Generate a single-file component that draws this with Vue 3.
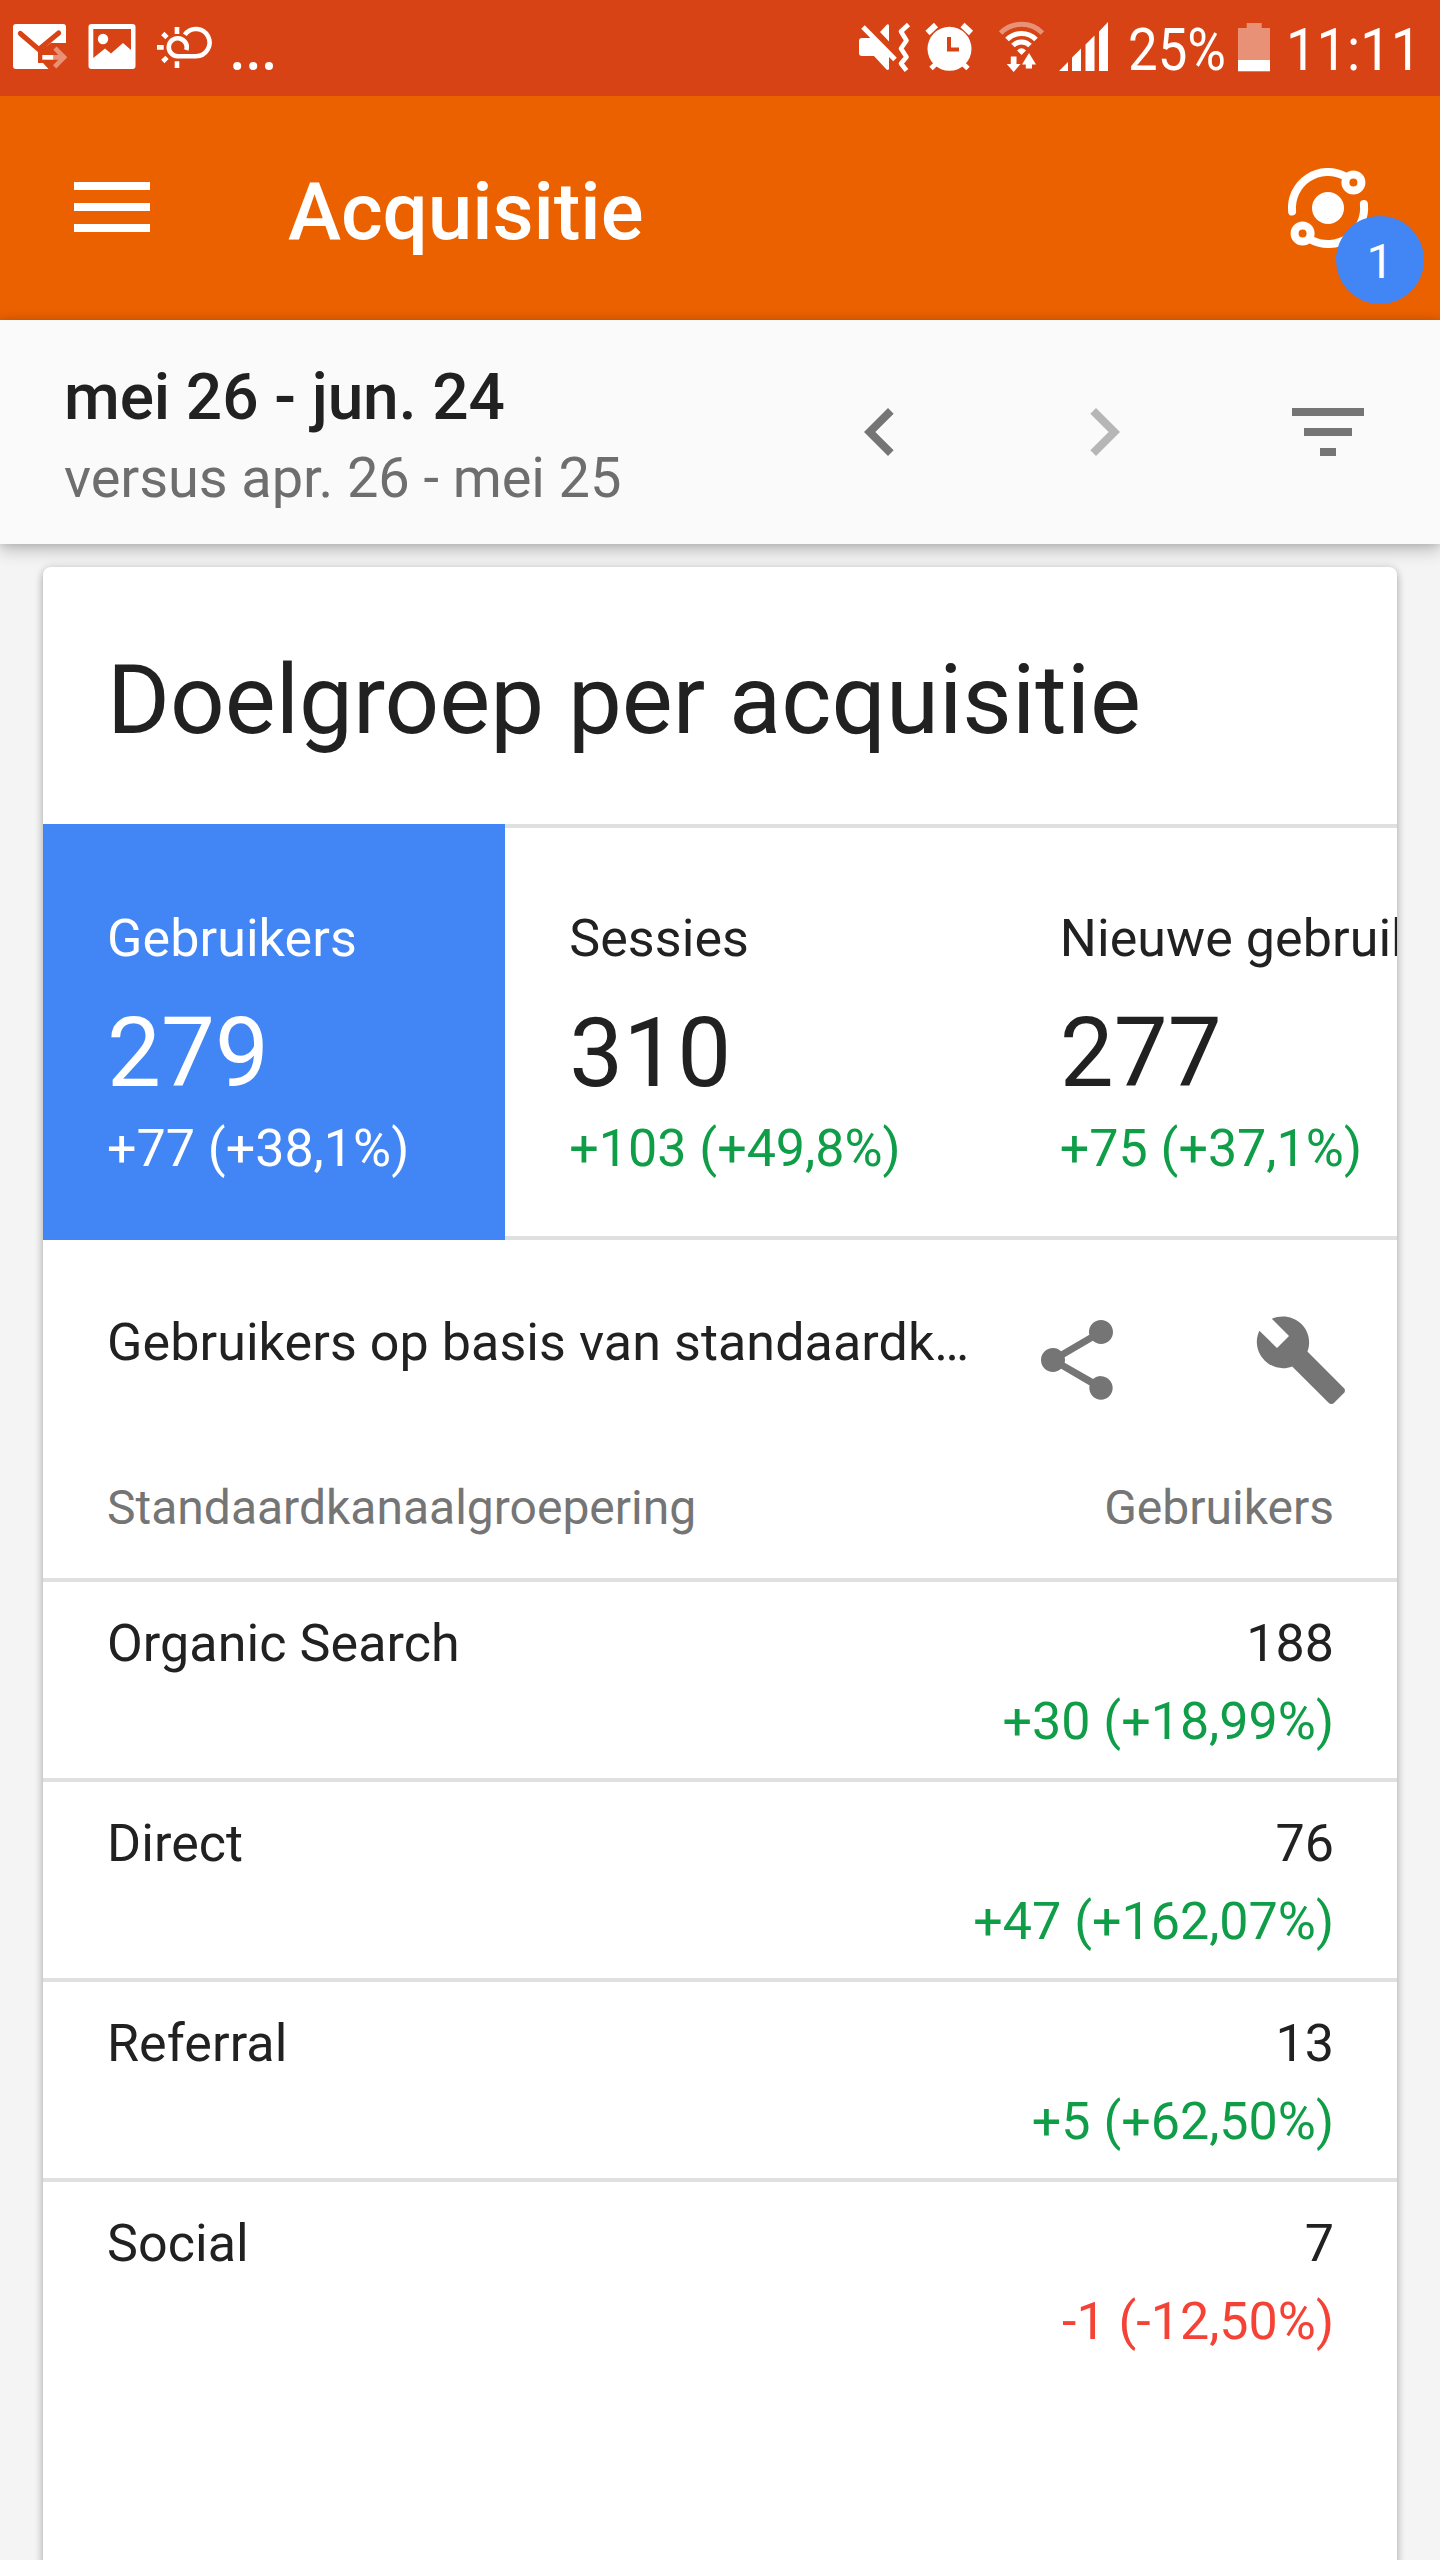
<template>
  <div class="screen">
    <header class="statusBar">
      <div class="statusGroup">
        <svg width="78" height="96" viewBox="0 0 78 96">
          <path fill="#fff" d="M16 24H63Q66 24 66 27V43H51L38 52V63H43L48.5 69H16Q13 69 13 66V27Q13 24 16 24Z" />
          <path class="cutStroke" d="M20.3 33.5L38.8 49.5L58.7 33" stroke-width="5" stroke-linecap="round" />
          <path fill="#fff" d="M42.3 55H53.3V59.7H42.3Z" />
          <path class="dim" d="M53.3 49.7L56.5 46.5L67.3 57.3L56.3 68.5L53 65.2L58.3 59.7H53.3V55H58.3Z" />
        </svg>
        <svg width="68" height="96" viewBox="78 0 68 96">
          <rect x="88.5" y="24" width="47" height="45" rx="3" fill="#fff" />
          <path class="cut" d="M93.3 29H131V50L123 43L111 53.5L105 48.5L93.3 58Z" />
          <circle cx="103" cy="39" r="5.2" fill="#fff" />
        </svg>
        <svg width="76" height="96" viewBox="146 0 76 96" fill="none" stroke="#fff" stroke-width="4.6">
          <path d="M177 27V34M157 47.4H163.7M177 61.3V68M162.8 33.5L167 37.7M162.8 61.5L167 57.3" />
          <path d="M184.8 34.8A13.6 13.6 0 1 1 196 56.2H177.5A9 9 0 1 1 186.3 50" />
        </svg>
        <svg width="68" height="96" viewBox="222 0 68 96" fill="#fff">
          <circle cx="237.2" cy="66" r="4" />
          <circle cx="253.2" cy="66" r="4" />
          <circle cx="269" cy="66" r="4" />
        </svg>
      </div>

      <div class="statusGroup">
        <svg width="60" height="96" viewBox="858 0 60 96">
          <path fill="#fff" d="M862 38H873L889 55V69Q888 71 886 69L874 56H862Q859 56 859 53V41Q859 38 862 38Z" />
          <path fill="#fff" d="M880 32L887 24.5Q889 23.5 889 26V41.5Z" />
          <path fill="none" stroke="#fff" stroke-width="5" d="M863 27L895 59.5" />
          <path fill="none" stroke="#fff" stroke-width="4.6" stroke-linejoin="round" d="M908.5 24.5L901 31.5L906.5 40.5L901 48.5L906.5 57L901 63.5L906.5 70.5" />
        </svg>
        <svg width="68" height="96" viewBox="918 0 68 96">
          <circle cx="949.5" cy="48.8" r="22" fill="#fff" />
          <path fill="none" stroke="#fff" stroke-width="6" d="M927.5 33L936 25M962.5 25L971 33" />
          <path fill="none" stroke="#fff" stroke-width="5" d="M931 68.5L939 61M968 68.5L960 61" />
          <path class="cutStroke" d="M949 37V49.5H959" stroke-width="4" />
        </svg>
        <svg width="64" height="96" viewBox="986 0 64 96">
          <g fill="none" stroke="#fff">
            <path opacity=".42" stroke-width="5" d="M1000.6 33A29.5 29.5 0 0 1 1042.4 33" />
            <path stroke-width="5" d="M1007 39.5A20.5 20.5 0 0 1 1036 39.5" />
            <path stroke-width="5" d="M1013 45.5A12 12 0 0 1 1030 45.5" />
          </g>
          <path fill="#fff" d="M1017 50.5Q1021.5 46 1026 50.5L1021.5 55Z" />
          <path fill="#fff" d="M1010.8 56.5H1016.5V64H1020.5L1013.6 72L1006.7 64H1010.8ZM1025.8 68.5V64.5H1022L1029 53L1036 64.5H1032V68.5Z" />
        </svg>
        <svg width="70" height="96" viewBox="1050 0 70 96" fill="#fff">
          <path d="M1059 71L1068 62V71ZM1072 71V57.5L1081 48.5V71ZM1085.5 71V44.5L1094.5 35.5V71ZM1099 71V31.5L1108 22V71Z" />
        </svg>
        <div class="statusText statusText--battery"><span>25%</span></div>
        <svg width="50" height="96" viewBox="1230 0 50 96">
          <path class="dim" d="M1238 28H1246.7V23H1261.7V28H1270V60H1238Z" />
          <path fill="#fff" d="M1238 60H1270V71.3H1238Z" />
        </svg>
        <div class="statusText statusText--clock"><span>11:11</span></div>
      </div>
    </header>

    <nav class="appBar">
      <button class="iconBtn menuBtn" type="button" aria-label="Menu">
        <svg width="76" height="50" viewBox="0 0 76 50" fill="#fff">
          <path d="M0 0H76V8H0ZM0 21H76V29H0ZM0 42H76V50H0Z" />
        </svg>
      </button>
      <h1 class="appTitle">Acquisitie</h1>
      <button class="iconBtn insightsBtn" type="button" aria-label="Insights">
        <svg width="96" height="96" viewBox="-48 -48 96 96" fill="none" stroke="#fff" stroke-width="8" stroke-linecap="round">
          <path d="M-35.9 3.5A36 36 0 0 1 17 -31.7" />
          <path d="M35.9 -4A36 36 0 0 1 -17 31.7" />
          <circle cx="25.4" cy="-25.4" r="8" />
          <circle cx="-25.4" cy="25.4" r="8" />
          <circle r="16" fill="#fff" stroke="none" />
        </svg>
        <span class="badge">1</span>
      </button>
    </nav>

    <section class="dateBar">
      <div class="dates">
        <p class="dateMain">mei 26 - jun. 24</p>
        <p class="dateSub">versus apr. 26 - mei 25</p>
      </div>
      <button class="iconBtn dateBtn" type="button" aria-label="Vorige">
        <svg width="96" height="96" viewBox="0 0 24 24"><path d="M15.41 7.41L14 6l-6 6 6 6 1.41-1.41L10.83 12z" /></svg>
      </button>
      <button class="iconBtn dateBtn dateBtn--off" type="button" aria-label="Volgende">
        <svg width="96" height="96" viewBox="0 0 24 24"><path d="M10 6L8.59 7.41 13.17 12l-4.58 4.59L10 18l6-6z" /></svg>
      </button>
      <button class="iconBtn dateBtn" type="button" aria-label="Filter">
        <svg width="96" height="96" viewBox="0 0 24 24"><path d="M10 18h4v-2h-4v2zM3 6v2h18V6H3zm3 7h12v-2H6v2z" /></svg>
      </button>
    </section>

    <main class="content">
      <article class="card">
        <h2 class="cardTitle">Doelgroep per acquisitie</h2>

        <div class="metrics">
          <div v-for="(m, i) in metrics" :key="m.label" class="metric" :class="{ 'metric--active': i === active }" @click="active = i">
            <p class="metricLabel">{{ m.label }}</p>
            <p class="metricValue">{{ m.value }}</p>
            <p class="metricDelta">{{ m.delta }}</p>
          </div>
        </div>

        <div class="tableHead">
          <h3 class="tableTitle">Gebruikers op basis van standaardkanaalgroepering</h3>
          <div class="tools">
            <svg width="96" height="96" viewBox="0 0 24 24">
              <path d="M18 16c-.76 0-1.44.3-1.96.77L8.91 12.7c.05-.23.09-.46.09-.7s-.04-.47-.09-.7l7.05-4.11c.54.5 1.25.81 2.04.81 1.66 0 3-1.34 3-3s-1.34-3-3-3-3 1.34-3 3c0 .24.04.47.09.7L8.04 9.81C7.5 9.31 6.79 9 6 9c-1.66 0-3 1.34-3 3s1.34 3 3 3c.79 0 1.5-.31 2.04-.81l7.12 4.16c-.05.21-.08.43-.08.65 0 1.61 1.31 2.92 2.92 2.92s2.92-1.31 2.92-2.92-1.31-2.92-2.92-2.92z" />
            </svg>
            <svg width="96" height="96" viewBox="0 0 24 24">
              <path d="M22.7 19l-9.1-9.1c.9-2.3.4-5-1.5-6.9-2-2-5-2.4-7.4-1.3L9 6 6 9 1.6 4.7C.4 7.1.9 10.1 2.900 12.100c1.900 1.900 4.600 2.400 6.900 1.500l9.100 9.100c.4.4 1 .4 1.400 0l2.300-2.300c.5-.4.5-1.100.1-1.400z" />
            </svg>
          </div>
        </div>

        <div class="columns">
          <span>Standaardkanaalgroepering</span>
          <span>Gebruikers</span>
        </div>

        <div v-for="row in rows" :key="row.channel" class="row">
          <span class="channel">{{ row.channel }}</span>
          <div class="rowValues">
            <p>{{ row.users }}</p>
            <p class="delta" :class="{ 'delta--down': row.delta.startsWith('-') }">{{ row.delta }}</p>
          </div>
        </div>
      </article>
    </main>
  </div>
</template>

<script setup>
import { ref } from 'vue'

const active = ref(0)

const metrics = [
  { label: 'Gebruikers', value: '279', delta: '+77 (+38,1%)' },
  { label: 'Sessies', value: '310', delta: '+103 (+49,8%)' },
  { label: 'Nieuwe gebruikers', value: '277', delta: '+75 (+37,1%)' }
]

const rows = [
  { channel: 'Organic Search', users: 188, delta: '+30 (+18,99%)' },
  { channel: 'Direct', users: 76, delta: '+47 (+162,07%)' },
  { channel: 'Referral', users: 13, delta: '+5 (+62,50%)' },
  { channel: 'Social', users: 7, delta: '-1 (-12,50%)' }
]
</script>

<style>
body {
  margin: 0;
  background: #f4f4f4;
}
</style>

<style scoped>
.screen {
  display: flex;
  flex-direction: column;
  width: 1440px;
  height: 2560px;
  overflow: hidden;
  background: #f4f4f4;
  color: #212121;
  font-family: Roboto, "Liberation Sans", sans-serif;
}

p,
h1,
h2,
h3 {
  margin: 0;
  font-weight: 400;
}

svg {
  display: block;
  flex: none;
}

.statusBar {
  display: flex;
  justify-content: space-between;
  flex: none;
  height: 96px;
  background: #d84315;
  color: #fff;
}

.statusGroup {
  display: flex;
}

.cut {
  fill: #d84315;
}

.cutStroke {
  fill: none;
  stroke: #d84315;
}

.dim {
  fill: #fff;
  opacity: 0.42;
}

.statusText {
  font-size: 60px;
  line-height: 99px;
  white-space: nowrap;
}

.statusText span {
  display: inline-block;
  transform: scaleX(0.88);
  transform-origin: left;
}

.statusText--battery {
  width: 102px;
  padding-left: 8px;
}

.statusText--clock {
  width: 154px;
  padding-left: 6px;
}

.statusText--clock span {
  transform: scaleX(0.905);
}

.iconBtn {
  display: flex;
  align-items: center;
  justify-content: center;
  flex: none;
  padding: 0;
  border: 0;
  background: transparent;
}

.appBar {
  display: flex;
  align-items: center;
  flex: none;
  height: 224px;
  background: #eb6100;
  color: #fff;
}

.menuBtn {
  box-sizing: border-box;
  width: 224px;
  height: 224px;
  padding-bottom: 2px;
}

.appTitle {
  flex: 1;
  padding: 7px 0 0 64px;
  font-size: 80px;
  font-weight: 500;
  letter-spacing: -0.1px;
  line-height: 100px;
}

.insightsBtn {
  position: relative;
  width: 224px;
  height: 224px;
}

.badge {
  position: absolute;
  top: 120px;
  left: 120px;
  width: 88px;
  height: 88px;
  border-radius: 50%;
  background: #4285f4;
  color: #fff;
  font-family: Roboto, "Liberation Sans", sans-serif;
  font-size: 48px;
  line-height: 91px;
  text-align: center;
}

.dateBar {
  position: relative;
  display: flex;
  align-items: center;
  flex: none;
  height: 224px;
  background: #fafafa;
  box-shadow: 0 6px 16px rgba(0, 0, 0, 0.24), 0 0 8px rgba(0, 0, 0, 0.12);
}

.dates {
  flex: 1;
  padding: 12px 0 0 64px;
}

.dateMain {
  font-size: 64px;
  font-weight: 500;
  letter-spacing: -0.1px;
  line-height: 80px;
}

.dateSub {
  color: #6e6e6e;
  font-size: 56px;
  letter-spacing: -0.1px;
  line-height: 80px;
}

.dateBtn {
  width: 224px;
  height: 224px;
  fill: #757575;
}

.dateBtn--off {
  fill: #b6b6b6;
}

.content {
  flex: 1;
  padding: 23px 43px 0;
}

.card {
  height: 2100px;
  border-radius: 8px;
  background: #fff;
  box-shadow: 0 4px 8px rgba(0, 0, 0, 0.24), 0 0 8px rgba(0, 0, 0, 0.12);
}

.cardTitle {
  height: 257px;
  padding-left: 64px;
  font-size: 96px;
  line-height: 267px;
}

.metrics {
  display: flex;
  height: 416px;
  overflow: hidden;
}

.metric {
  flex: none;
  box-sizing: border-box;
  padding: 81px 96px 0 64px;
  border-top: 4px solid #e0e0e0;
  border-bottom: 4px solid #e0e0e0;
  white-space: nowrap;
}

.metric + .metric {
  padding-right: 95px;
}

.metric--active {
  border-color: #4285f4;
  background: #4285f4;
  color: #fff;
}

.metricLabel,
.metricDelta {
  font-size: 52px;
  line-height: 60px;
}

.metricLabel,
.tableTitle,
.channel {
  letter-spacing: 0.08px;
}

.metricValue {
  margin: 28px 0 10px;
  font-size: 96px;
  line-height: 112px;
}

.metricDelta,
.delta {
  color: #0f9d48;
}

.metric--active .metricDelta {
  color: #fff;
}

.tableHead {
  display: flex;
  justify-content: space-between;
  height: 168px;
  padding: 72px 48px 0 64px;
}

.tableTitle {
  width: 865px;
  overflow: hidden;
  font-size: 52px;
  line-height: 62px;
  text-overflow: ellipsis;
  white-space: nowrap;
}

.tools {
  display: flex;
  gap: 128px;
  fill: #757575;
}

.columns {
  display: flex;
  justify-content: space-between;
  height: 98px;
  padding: 0 63px 0 64px;
  color: #757575;
  font-size: 48px;
  line-height: 56px;
}

.row {
  display: flex;
  justify-content: space-between;
  box-sizing: border-box;
  height: 200px;
  padding: 32px 63px 0 64px;
  border-top: 4px solid #e0e0e0;
  font-size: 52px;
  line-height: 60px;
}

.rowValues {
  display: flex;
  flex-direction: column;
  gap: 18px;
  text-align: right;
}

.delta--down {
  color: #f44336;
}
</style>
